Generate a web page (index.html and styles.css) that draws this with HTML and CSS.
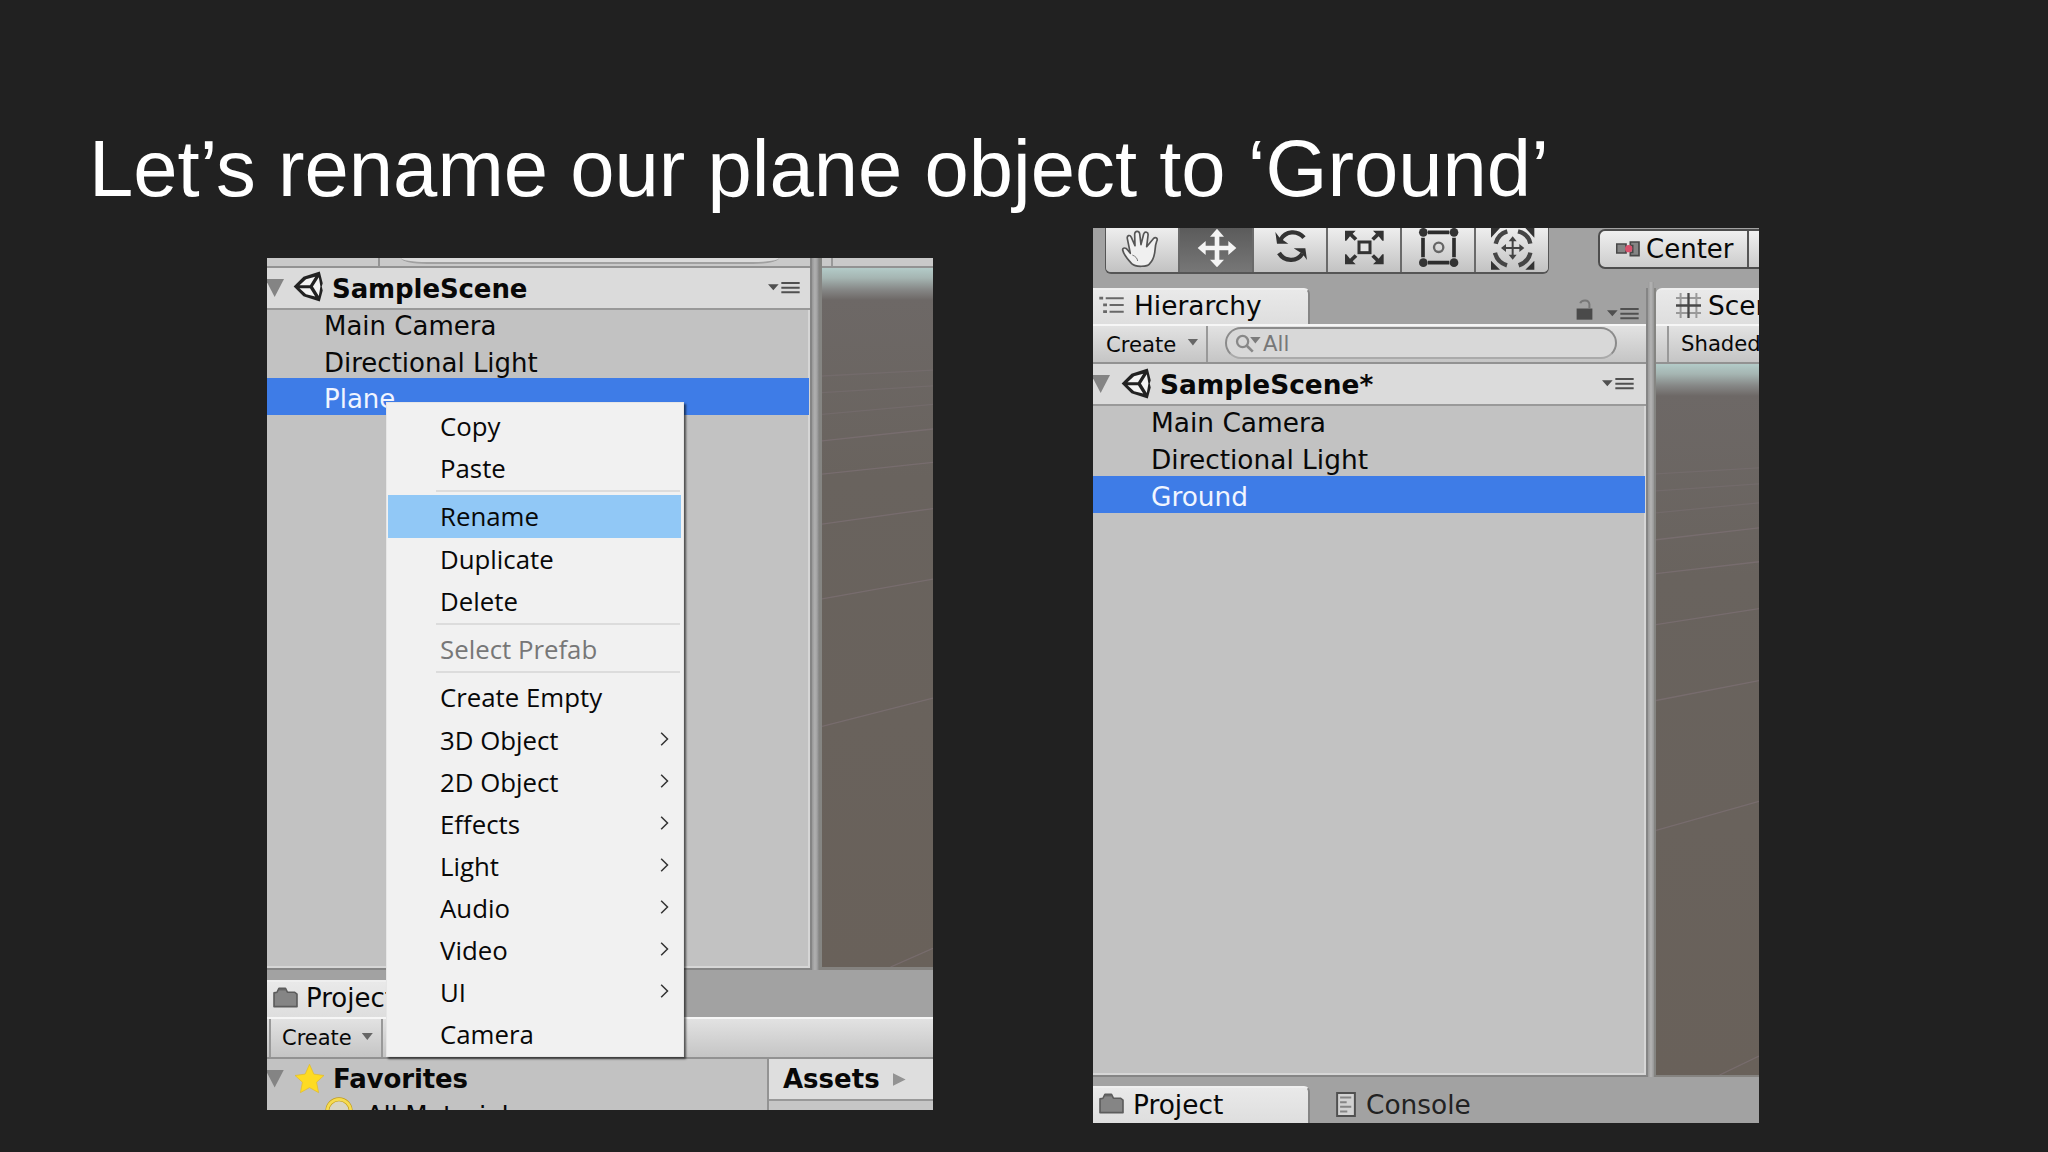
FILE: index.html
```html
<!DOCTYPE html>
<html lang="en">
<head>
    <meta charset="UTF-8" />
    <meta name="viewport" content="width=device-width, initial-scale=1.0"/>
    <title>Let’s rename our plane object to ‘Ground’</title>
    <link rel="stylesheet" href="styles.css">
</head>
<body>
    <!-- shared icons -->
    <svg class="defs" width="0" height="0">
        <symbol id="unity" viewBox="0 0 98 100">
            <path d="M2 50 L32 20 L82 4 L91 40 L88 50 L91 62 L82 96 L32 80Z" fill="#222"/>
            <path d="M20 46 L40 28 L68 20 L52 46Z M20 55 L52 55 L68 81 L40 74Z M61 50 L79 22 L84 50 L79 79Z" fill="#f4f4f4"/>
        </symbol>
        <symbol id="options" viewBox="0 0 96 36">
            <path d="M0 7H32L16 25Z M40 0H95V6H40Z M40 14H95V20H40Z M40 28H95V34H40Z" fill="#505050"/>
        </symbol>
        <symbol id="folder" viewBox="0 0 76 64">
            <path d="M3 18 L12 16 L18 4 H38 L44 16 H66 L73 22 V60 H3Z" fill="#858585" stroke="#5c5c5c" stroke-width="5" stroke-linejoin="round"/>
            <path d="M18 8H38" stroke="#666" stroke-width="5"/>
        </symbol>
        <symbol id="ground" viewBox="0 0 102 712" preserveAspectRatio="none">
            <g stroke="#7d7175" stroke-width="1.3" fill="none">
                <path d="M0 110L102 104M0 127L102 120M0 149L102 139" opacity=".45"/>
                <path d="M0 176L102 164M0 210L102 198M0 261L102 245M0 337L102 317M0 467L102 438M63 712L102 693" opacity=".7"/>
            </g>
        </symbol>
    </svg>

    <header class="title">
        <h1>Let’s rename our plane object to ‘Ground’</h1>
    </header>

    <main class="shots">
        <section class="shot before">
            <div class="upper">
                <div class="hierarchy">
                    <div class="strip"><span class="strip-cell"></span><span class="strip-search"></span></div>
                    <div class="scene-head">
                        <span class="fold"></span>
                        <svg class="unity"><use href="#unity"/></svg>
                        <b>SampleScene</b>
                        <svg class="options"><use href="#options"/></svg>
                    </div>
                    <ul class="objects">
                        <li>Main Camera</li>
                        <li>Directional Light</li>
                        <li class="selected">Plane</li>
                    </ul>
                </div>
                <div class="divider"></div>
                <div class="viewport">
                    <div class="strip"><span class="strip-stub"></span></div>
                    <div class="view"><svg><use href="#ground"/></svg></div>
                </div>
            </div>
            <div class="tabs">
                <div class="tab"><svg class="folder"><use href="#folder"/></svg>Project</div>
            </div>
            <div class="toolbar">
                <div class="create">Create<span class="caret"></span></div>
            </div>
            <div class="browser">
                <div class="favorites">
                    <div class="fav-head">
                        <span class="fold"></span>
                        <svg class="star" viewBox="0 0 92 92"><path d="M46 4L59 33L89 37L67 57L73 88L46 73L19 88L25 57L3 37L33 33Z" fill="#fedb22" stroke="#e0b92a" stroke-width="2" stroke-linejoin="round"/></svg>
                        <b>Favorites</b>
                    </div>
                    <div class="fav-item">
                        <svg class="lens" viewBox="0 0 84 84"><circle cx="42" cy="42" r="35" fill="#d8d5c4" stroke="#c39d18" stroke-width="12"/><circle cx="42" cy="42" r="35" fill="none" stroke="#f6dc50" stroke-width="8"/></svg>
                        All Materials
                    </div>
                </div>
                <div class="assets">
                    <div class="assets-head"><b>Assets</b><span class="crumb"></span></div>
                </div>
            </div>

            <!-- right-click menu -->
            <div class="menu">
                <div class="item">Copy</div>
                <div class="item">Paste</div>
                <div class="sep"></div>
                <div class="item hover">Rename</div>
                <div class="item">Duplicate</div>
                <div class="item">Delete</div>
                <div class="sep"></div>
                <div class="item disabled">Select Prefab</div>
                <div class="sep"></div>
                <div class="item">Create Empty</div>
                <div class="item">3D Object<svg class="arrow" viewBox="0 0 26 42"><path d="M3 2L22 21L3 40"/></svg></div>
                <div class="item">2D Object<svg class="arrow" viewBox="0 0 26 42"><path d="M3 2L22 21L3 40"/></svg></div>
                <div class="item">Effects<svg class="arrow" viewBox="0 0 26 42"><path d="M3 2L22 21L3 40"/></svg></div>
                <div class="item">Light<svg class="arrow" viewBox="0 0 26 42"><path d="M3 2L22 21L3 40"/></svg></div>
                <div class="item">Audio<svg class="arrow" viewBox="0 0 26 42"><path d="M3 2L22 21L3 40"/></svg></div>
                <div class="item">Video<svg class="arrow" viewBox="0 0 26 42"><path d="M3 2L22 21L3 40"/></svg></div>
                <div class="item">UI<svg class="arrow" viewBox="0 0 26 42"><path d="M3 2L22 21L3 40"/></svg></div>
                <div class="item">Camera</div>
            </div>
        </section>

        <section class="shot after">
            <div class="tools">
                <div class="tool-group">
                    <div class="tool">
                        <svg viewBox="0 0 216 135"><path d="M74 107C62 94 50 80 47 66C46 58 57 58 62 66L70 76L61 32C59 22 69 19 73 28L84 53L83 18C84 8 96 7 98 17L102 50L110 18C114 9 125 12 123 23L119 56L139 32C146 25 154 31 149 40C140 61 150 86 128 107C122 116 87 119 74 107Z" fill="#f0f0f0" stroke="#555" stroke-width="5" stroke-linejoin="round"/><path d="M76 81C86 85 91 91 92 99" fill="none" stroke="#777" stroke-width="3"/></svg>
                    </div>
                    <div class="tool active">
                        <svg viewBox="0 0 216 135"><path d="M108 2L129 26H115V53H142V39L166 60L142 81V67H115V95H129L108 118L87 95H101V67H74V81L50 60L74 39V53H101V26H87Z" fill="#f4f4f4"/></svg>
                    </div>
                    <div class="tool">
                        <svg viewBox="0 0 216 135"><path d="M76 36C92 8 127 6 147 29M142 77C126 103 88 101 72 75" fill="none" stroke="#333" stroke-width="13"/><path d="M61 12L66 47H100L87 38L75 31Z M156 96L151 61H116L129 69L142 77Z" fill="#333"/></svg>
                    </div>
                    <div class="tool">
                        <svg viewBox="0 0 216 135"><rect x="90" y="42" width="33" height="32" fill="#e4e4e4" stroke="#333" stroke-width="9"/><path d="M48 8H80L71 17L85 31L77 38L63 25L52 38H48Z M164 8H132L141 17L127 31L135 38L149 25L160 38H164Z M48 109H80L71 100L85 86L77 79L63 92L52 79H48Z M164 109H132L141 100L127 86L135 79L149 92L160 79H164Z" fill="#333"/></svg>
                    </div>
                    <div class="tool">
                        <svg viewBox="0 0 216 135"><path d="M75 13H139M75 104H139M60 29V88M153 29V88" stroke="#2d2d2d" stroke-width="11"/><circle cx="107" cy="58" r="14" fill="none" stroke="#666" stroke-width="7"/><g fill="#333"><circle cx="61" cy="13" r="13"/><circle cx="153" cy="13" r="13"/><circle cx="61" cy="104" r="13"/><circle cx="153" cy="104" r="13"/></g></svg>
                    </div>
                    <div class="tool">
                        <svg viewBox="0 0 216 135"><path d="M42 0H69L42 29Z M172 0H145L172 29Z M42 125V98L69 125Z M172 125V98L145 125Z" fill="#333"/><path d="M56 47C60 29 73 15 91 10M123 10C143 15 157 29 160 47M160 74C156 93 143 106 125 112M90 112C70 106 58 92 54 74" fill="none" stroke="#454545" stroke-width="13"/><path d="M107 34V86M80 60H134" stroke="#444" stroke-width="6"/><path d="M107 25L119 40H95Z M107 95L119 80H95Z M72 60L87 48V72Z M142 60L127 48V72Z" fill="#444"/></svg>
                    </div>
                </div>
                <div class="pivot">
                    <div class="pivot-btn">
                        <svg viewBox="0 0 72 48"><path d="M2 9H30V36H2Z M43 3H69V44H43V34H50V14H43Z" fill="#858585" stroke="#484848" stroke-width="5"/><circle cx="38" cy="23" r="11" fill="#d9506c"/></svg>
                        Center
                    </div>
                </div>
            </div>
            <div class="upper">
                <div class="hierarchy">
                    <div class="tabs">
                        <div class="tab">
                            <svg class="tree" viewBox="0 0 76 56"><path d="M0 2H12V11H0Z M20 4H76V10H20Z M12 23H24V32H12Z M32 25H76V31H32Z M12 44H24V53H12Z M32 46H76V52H32Z" fill="#686868"/></svg>
                            Hierarchy
                        </div>
                        <div class="tab-tools">
                            <svg class="lock" viewBox="0 0 50 64"><path d="M1 29H49V63H1Z" fill="#4a4a4a"/><path d="M12 13C15 3 38 -1 40 16V29" fill="none" stroke="#777" stroke-width="6"/></svg>
                            <svg class="options"><use href="#options"/></svg>
                        </div>
                    </div>
                    <div class="toolbar">
                        <div class="create">Create<span class="caret"></span></div>
                        <div class="search">
                            <svg viewBox="0 0 82 58"><circle cx="23" cy="23" r="17" fill="none" stroke="#888" stroke-width="7"/><path d="M36 36L54 54" stroke="#888" stroke-width="8"/><path d="M46 9H78L62 29Z" fill="#7b7b7b"/></svg>
                            All
                        </div>
                    </div>
                    <div class="scene-head">
                        <span class="fold"></span>
                        <svg class="unity"><use href="#unity"/></svg>
                        <b>SampleScene*</b>
                        <svg class="options"><use href="#options"/></svg>
                    </div>
                    <ul class="objects">
                        <li>Main Camera</li>
                        <li>Directional Light</li>
                        <li class="selected">Ground</li>
                    </ul>
                </div>
                <div class="divider"></div>
                <div class="viewport">
                    <div class="tab">
                        <svg class="grid" viewBox="0 0 76 76"><path d="M14 0V76M62 0V76M0 15H76M0 61H76" stroke="#999" stroke-width="6"/><path d="M38 0V76M0 38H76" stroke="#484848" stroke-width="7"/></svg>
                        Scene
                    </div>
                    <div class="toolbar"><div class="shaded">Shaded</div></div>
                    <div class="view"><svg><use href="#ground"/></svg></div>
                </div>
            </div>
            <div class="tabs bottom">
                <div class="tab"><svg class="folder"><use href="#folder"/></svg>Project</div>
                <div class="tab-off">
                    <svg viewBox="0 0 60 76"><path d="M3 3H57V73H3Z" fill="#d2d2d2" stroke="#505050" stroke-width="6"/><path d="M12 17H46M12 31H32M12 45H46M12 59H34" stroke="#858585" stroke-width="6"/></svg>
                    Console
                </div>
            </div>
        </section>
    </main>
</body>
</html>
```

FILE: styles.css
```css
* {
    margin: 0;
    padding: 0;
    box-sizing: border-box;
}
body {
    width: 2048px;
    height: 1152px;
    overflow: hidden;
    background: #212121;
    font-family: "DejaVu Sans", Verdana, sans-serif;
    color: #080808;
}
svg {
    display: block;
    flex: none;
}
.defs {
    position: absolute;
}

/* slide title */
.title {
    height: 228px;
    padding: 123px 0 0 89px;
}
.title h1 {
    font-family: "Liberation Sans", Arial, sans-serif;
    font-size: 79.6px;
    font-weight: normal;
    line-height: 92px;
    letter-spacing: 0.03px;
    color: #fff;
    white-space: nowrap;
}

/* the two editor captures */
.shots {
    display: flex;
    align-items: flex-start;
    gap: 160px;
    padding-left: 267px;
}
.shot {
    width: 666px;
    overflow: hidden;
    position: relative;
    background: #a2a2a2;
    font-size: 26px;
    white-space: nowrap;
}
.before {
    height: 852px;
    margin-top: 30px;
}
.after {
    height: 895px;
    font-size: 26.4px;
}
.upper {
    display: flex;
}
.hierarchy {
    background: #c2c2c2;
}
.before .upper {
    height: 712px;
}
.before .hierarchy {
    width: 545px;
    border-right: 2px solid #858585;
    border-bottom: 2px solid #858585;
    box-shadow: inset -2px -2px #d6d6d6;
}
.before .divider {
    width: 7px;
    height: 712px;
    background: linear-gradient(90deg, #979797, #b0b0b0 40%, #a4a4a4 70%, #858585);
}
.before .viewport {
    flex: 1;
    border-left: 3px solid #858582;
    border-bottom: 3px solid #858380;
}

/* cut-off toolbar at the top */
.strip {
    display: flex;
    height: 10px;
    background: #c9c9c9;
    border-bottom: 2px solid #929292;
}
.strip-cell {
    width: 113px;
    border-right: 2px solid #939393;
}
.strip-search {
    width: 378px;
    height: 6px;
    margin-left: 21px;
    background: #dadada;
    border-bottom: 2px solid #a0a0a0;
    border-radius: 0 0 26px 26px / 0 0 6px 6px;
}
.strip-stub {
    width: 11px;
    border-right: 2px solid #999;
}

.scene-head {
    display: flex;
    align-items: center;
    height: 42px;
    background: #dbdbdb;
    border-bottom: 2px solid #999;
}
.scene-head b {
    margin-left: 7px;
}
.before .scene-head b {
    padding-top: 2px;
    letter-spacing: -0.1px;
}
.fold {
    width: 17px;
    height: 18px;
    background: #848484;
    clip-path: polygon(-10% 0, 100% 0, 45% 100%);
}
.unity {
    width: 32px;
    height: 33px;
    margin-left: 9px;
}
.before .unity {
    margin-top: -3px;
}
.options {
    width: 32px;
    height: 12px;
    margin-left: auto;
}
.scene-head .options {
    margin-right: 10px;
}
.objects {
    list-style: none;
    margin-top: -5px;
}
.objects li {
    height: 36.7px;
    line-height: 42px;
    padding-left: 57px;
}
.objects .selected {
    color: #f0f5ff;
    background: #3e7ce7;
    margin-right: 1px;
}

/* 3D view */
.view {
    background: linear-gradient(#b3cbc8 0, #a5b5b2 10px, #858685 22px, #6d6866 32px, #69635e 30%, #69615a 100%);
}
.view svg {
    width: 100%;
    height: 100%;
}
.before .view {
    height: 699px;
}

.tab {
    display: flex;
    align-items: center;
    padding-bottom: 3px;
    background: linear-gradient(#e9e9e9, #dedede);
    border-top: 2px solid #efefef;
}
.folder {
    width: 25px;
    height: 21px;
}
.before .tabs {
    height: 47px;
    padding-top: 10px;
}
.before .tab {
    width: 216px;
    height: 37px;
    padding-left: 6px;
    padding-bottom: 4px;
}
.before .folder {
    margin: -1px 8px 0 0;
}
.toolbar {
    display: flex;
    height: 42px;
    background: linear-gradient(#e2e2e2, #c5c5c5);
    border-top: 2px solid #f6f6f6;
    border-bottom: 2px solid #929292;
}
.create {
    display: flex;
    align-items: center;
    width: 112px;
    font-size: 21px;
    border-right: 2px solid #999;
}
.caret {
    width: 11px;
    height: 7px;
    margin: -3px 0 0 10px;
    background: #666;
    clip-path: polygon(0 0, 100% 0, 50% 100%);
}
.before .create {
    width: 114px;
    margin-left: 2px;
    padding-left: 11px;
    border-left: 2px solid #999;
}

/* project browser */
.browser {
    display: flex;
    height: 60px;
}
.favorites {
    width: 502px;
    background: #c2c2c2;
    border-right: 2px solid #939393;
}
.fav-head {
    display: flex;
    align-items: center;
    height: 40px;
}
.fav-head .fold {
    margin-top: -1px;
}
.star {
    width: 31px;
    height: 31px;
    margin: -2px 0 0 10px;
}
.fav-head b {
    margin-left: 8px;
    letter-spacing: -0.1px;
}
.fav-item {
    display: flex;
    padding-left: 58px;
    line-height: 34px;
    letter-spacing: -0.3px;
}
.lens {
    width: 28px;
    height: 28px;
    margin: -2px 13px 0 0;
}
.assets {
    flex: 1;
    background: #c6c6c6;
}
.assets-head {
    display: flex;
    align-items: center;
    height: 42px;
    padding-left: 14px;
    padding-bottom: 1px;
    background: #dedede;
    border-bottom: 2px solid #999;
}
.crumb {
    width: 13px;
    height: 13px;
    margin: 2px 0 0 13px;
    background: #939393;
    clip-path: polygon(0 0, 100% 50%, 0 100%);
}

/* context menu */
.menu {
    position: absolute;
    left: 119px;
    top: 144px;
    width: 298px;
    height: 655px;
    padding: 2px 2px 2px 1px;
    background: #f1f1f1;
    border: 1px solid #e6e6e6;
    box-shadow: 2px 2px 2px rgba(0,0,0,0.6);
    font-family: "Open Sans", "Segoe UI", sans-serif;
    font-size: 25.8px;
}
.item {
    display: flex;
    justify-content: space-between;
    height: 42.1px;
    padding: 0 12px 0 52px;
    line-height: 42px;
}
.item.hover {
    background: #91c8f6;
}
.item.disabled {
    color: #777;
}
.sep {
    height: 2px;
    margin: 1px 1px 3.3px 48px;
    background: #dcdcdc;
}
.arrow {
    width: 9px;
    height: 14px;
    margin-top: 13px;
}
.arrow path {
    fill: none;
    stroke: #333;
    stroke-width: 4.5;
}

/* second capture */
.tools {
    display: flex;
    height: 60px;
    padding-left: 12px;
}
.tool-group {
    display: flex;
    flex: none;
    height: 46px;
    border: 1px solid #555;
    border-top: 0;
    border-bottom-width: 2px;
    border-radius: 0 0 6px 6px;
    overflow: hidden;
}
.tool {
    flex: none;
    width: 74px;
    background: linear-gradient(#eee, #c2c2c2);
    border-right: 2px solid #6a6a6a;
}
.tool:last-child {
    width: 72px;
    border-right: 0;
}
.tool.active {
    background: linear-gradient(#5b5b5b, #777);
}
.tool svg {
    width: 72px;
    height: 45px;
    margin-left: 1px;
}
.pivot {
    flex: none;
    width: 220px;
    height: 40px;
    margin: 1px 0 0 49px;
    background: linear-gradient(#f0f0f0, #ccc);
    border: 2px solid #4d4d4d;
    border-radius: 7px;
}
.pivot-btn {
    display: flex;
    align-items: center;
    width: 149px;
    height: 36px;
    padding-left: 16px;
    padding-bottom: 1px;
    border-right: 2px solid #555;
    font-size: 26px;
}
.pivot-btn svg {
    width: 24px;
    height: 16px;
    margin-right: 6px;
}
.after .upper {
    height: 789px;
}
.after .hierarchy {
    width: 555px;
    border-right: 2px solid #858585;
    border-bottom: 2px solid #858585;
    box-shadow: inset -2px -2px #d6d6d6;
}
.after .tabs {
    display: flex;
    height: 36px;
    background: #a2a2a2;
}
.after .tab {
    width: 217px;
    height: 36px;
    padding-left: 6px;
    border-right: 2px solid #858585;
    border-radius: 0 6px 0 0;
}
.tree {
    width: 25px;
    height: 18px;
    margin: -1px 10px 0 0;
}
.tab-tools {
    display: flex;
    align-items: flex-end;
    margin-left: 266px;
    gap: 14px;
    padding-bottom: 4px;
}
.lock {
    width: 17px;
    height: 21px;
}
.after .toolbar {
    height: 40px;
}
.after .create {
    width: 115px;
    padding-left: 13px;
    font-size: 21.2px;
}
.after .caret {
    margin-left: 11px;
    margin-top: -4px;
}
.search {
    display: flex;
    align-items: center;
    width: 392px;
    height: 32px;
    margin: 1px 0 0 17px;
    padding-left: 8px;
    background: #d8d8d8;
    border: 2px solid #8b8b8b;
    border-bottom-color: #aaa;
    border-radius: 16px;
    font-size: 21.2px;
    color: #777;
}
.search svg {
    width: 27px;
    height: 19px;
    margin-right: 1px;
}
.after .scene-head {
    height: 42px;
}
.after .scene-head .unity {
    margin-left: 11px;
    margin-top: -2px;
}
.after .scene-head .options {
    margin-right: 12px;
}
.after .objects {
    margin-top: -4px;
}
.after .objects li {
    height: 37.1px;
    line-height: 41px;
    padding-left: 58px;
}
.after .divider {
    width: 6px;
    margin-top: -6px;
    background: linear-gradient(90deg, #9b9b9b, #b4b4b4, #969696);
}
.after .viewport {
    flex: 1;
    overflow: hidden;
    border-left: 2px solid #858582;
    border-bottom: 2px solid #858380;
}
.after .viewport .tab {
    border-radius: 6px 0 0 0;
    padding-left: 20px;
}
.grid {
    width: 25px;
    height: 25px;
    margin: -1px 7px 0 0;
}
.shaded {
    margin-left: 11px;
    padding-left: 12px;
    border-left: 2px solid #999;
    font-size: 21.2px;
    line-height: 36px;
}
.after .view {
    height: 711px;
}
.after .bottom {
    height: 46px;
    padding-top: 9px;
}
.after .bottom .tab {
    height: 37px;
    padding-bottom: 2px;
}
.after .folder {
    margin: -2px 9px 0 0;
}
.tab-off {
    display: flex;
    align-items: center;
    margin-left: 26px;
    color: #222;
}
.tab-off svg {
    width: 20px;
    height: 25px;
    margin-right: 10px;
}
```
